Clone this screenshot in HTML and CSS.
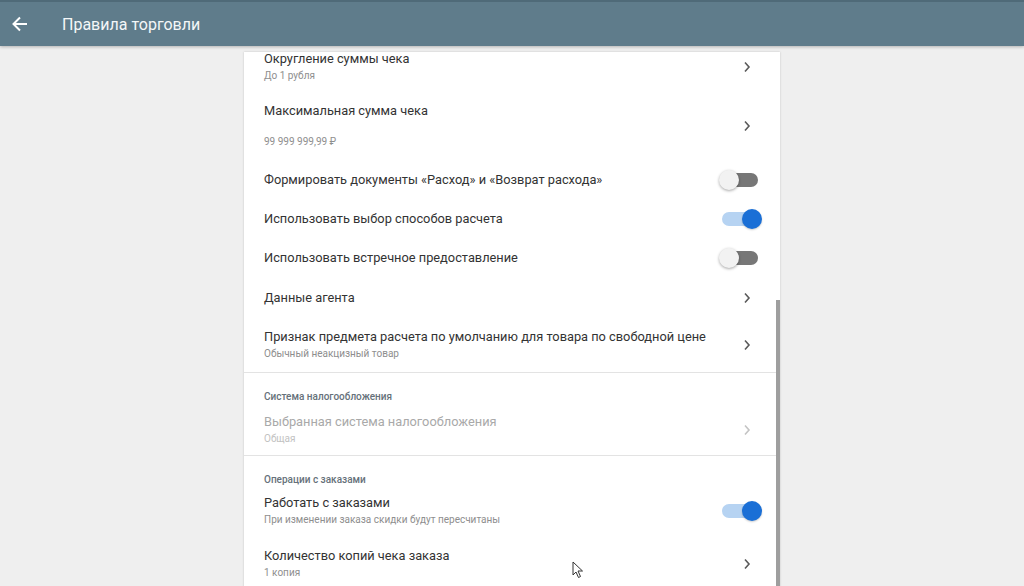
FILE: index.html
```html
<!DOCTYPE html>
<html lang="ru">
<head>
  <meta charset="UTF-8" />
  <meta name="viewport" content="width=device-width, initial-scale=1" />
  <title>Правила торговли</title>
  <link rel="stylesheet" href="styles.css">
</head>
<body>
  <div class="header">
    <svg class="back" width="18" height="18" viewBox="0 0 18 18">
      <path d="M16 9H3M9 2.5L2.5 9L9 15.5" fill="none" stroke="#fff" stroke-width="2"/>
    </svg>
    <h1>Правила торговли</h1>
  </div>

  <div class="card">
    <div class="row first">
      <div class="text">
        <div class="title">Округление суммы чека</div>
        <div class="sub">До 1 рубля</div>
      </div>
      <svg class="chev" width="8" height="12" viewBox="0 0 8 12"><path d="M2 1.5L6 6L2 10.5" /></svg>
    </div>
    <div class="row tall">
      <div class="text">
        <div class="title">Максимальная сумма чека</div>
        <div class="sub spaced">99 999 999,99 ₽</div>
      </div>
      <svg class="chev" width="8" height="12" viewBox="0 0 8 12"><path d="M2 1.5L6 6L2 10.5" /></svg>
    </div>
    <div class="row single">
      <div class="title">Формировать документы «Расход» и «Возврат расхода»</div>
      <div class="switch"><span class="track"></span><span class="thumb"></span></div>
    </div>
    <div class="row single">
      <div class="title">Использовать выбор способов расчета</div>
      <div class="switch on"><span class="track"></span><span class="thumb"></span></div>
    </div>
    <div class="row single">
      <div class="title">Использовать встречное предоставление</div>
      <div class="switch"><span class="track"></span><span class="thumb"></span></div>
    </div>
    <div class="row single wide">
      <div class="title">Данные агента</div>
      <svg class="chev" width="8" height="12" viewBox="0 0 8 12"><path d="M2 1.5L6 6L2 10.5" /></svg>
    </div>
    <div class="row double">
      <div class="text">
        <div class="title">Признак предмета расчета по умолчанию для товара по свободной цене</div>
        <div class="sub">Обычный неакцизный товар</div>
      </div>
      <svg class="chev" width="8" height="12" viewBox="0 0 8 12"><path d="M2 1.5L6 6L2 10.5" /></svg>
    </div>

    <div class="section">
      <div class="section-title">Система налогообложения</div>
      <div class="row double disabled">
        <div class="text">
          <div class="title">Выбранная система налогообложения</div>
          <div class="sub">Общая</div>
        </div>
        <svg class="chev" width="8" height="12" viewBox="0 0 8 12"><path d="M2 1.5L6 6L2 10.5" /></svg>
      </div>
    </div>

    <div class="section">
      <div class="section-title">Операции с заказами</div>
      <div class="row orders">
        <div class="text">
          <div class="title">Работать с заказами</div>
          <div class="sub">При изменении заказа скидки будут пересчитаны</div>
        </div>
        <div class="switch on"><span class="track"></span><span class="thumb"></span></div>
      </div>
      <div class="row copies">
        <div class="text">
          <div class="title">Количество копий чека заказа</div>
          <div class="sub">1 копия</div>
        </div>
        <svg class="chev" width="8" height="12" viewBox="0 0 8 12"><path d="M2 1.5L6 6L2 10.5" /></svg>
      </div>
    </div>

    <div class="scrollbar"></div>
  </div>

  <svg class="cursor" width="12" height="18" viewBox="0 0 12 18">
    <path d="M1 1V14L4 11L6.5 16.5L8.5 15.5L6 10H10.5Z" fill="#fff" stroke="#333" stroke-width="1"/>
  </svg>
</body>
</html>
```

FILE: styles.css
```css
html, body { margin: 0; padding: 0; height: 100%; overflow: hidden; }
body { font-family: Roboto, "Noto Sans", Arial, sans-serif; background: #efefef; color: #333; }

.header { height: 46px; background: #5f7c8b; display: flex; align-items: center; box-shadow: 0 1px 3px rgba(0,0,0,0.25); border-top: 2px solid #4f6a78; box-sizing: border-box; position: relative; z-index: 1; }
.header .back { margin-left: 11px; }
.header h1 { margin: 0 0 0 33px; font-size: 16px; font-weight: 400; color: #f4f7f8; }

.card { position: relative; width: 536px; margin: 6px auto 0; background: #fff; box-shadow: 0 0 2px rgba(0,0,0,0.18); height: 540px; overflow: hidden; }

.row { display: flex; align-items: center; justify-content: space-between; padding: 0 22px 0 20px; }
.row.first { min-height: 50px; margin-top: -10px; }
.row.tall { min-height: 68px; }
.row.single { min-height: 39px; }
.row.wide { min-height: 41px; }
.row.double { min-height: 54px; border-bottom: 1px solid #e3e3e3; }
.section .row.double { min-height: 51px; }
.row.orders { min-height: 48px; }
.row.copies { min-height: 58px; }

.title { font-size: 12.8px; line-height: 16px; color: #333; }
.sub { font-size: 10px; line-height: 14px; color: #8e8e8e; margin-top: 2px; }
.sub.spaced { margin-top: 16px; }

.disabled .title { color: #a9a9a9; }
.disabled .sub { color: #c2c2c2; }
.disabled .chev path { stroke: #c4c4c4; }

.chev { margin-right: 7px; flex: none; }
.chev path { fill: none; stroke: #5a5a5a; stroke-width: 1.6; }

.section-title { font-size: 10px; line-height: 14px; font-weight: 500; color: #66717a; padding: 17px 20px 0; }

.switch { position: relative; width: 36px; height: 20px; flex: none; }
.switch .track { position: absolute; left: 0; top: 3px; width: 36px; height: 14px; border-radius: 7px; background: #777; }
.switch .thumb { position: absolute; left: -3px; top: 0; width: 20px; height: 20px; border-radius: 50%; background: #f2f2f2; box-shadow: 0 1px 3px rgba(0,0,0,0.35); }
.switch.on .track { background: #b6d3f2; }
.switch.on .thumb { left: 20px; background: #1a6fd6; box-shadow: 0 1px 2px rgba(0,0,0,0.2); }

.scrollbar { position: absolute; right: 0; top: 248px; width: 4px; bottom: 0; background: #9e9e9e; }

.cursor { position: absolute; left: 572px; top: 561px; }
```
